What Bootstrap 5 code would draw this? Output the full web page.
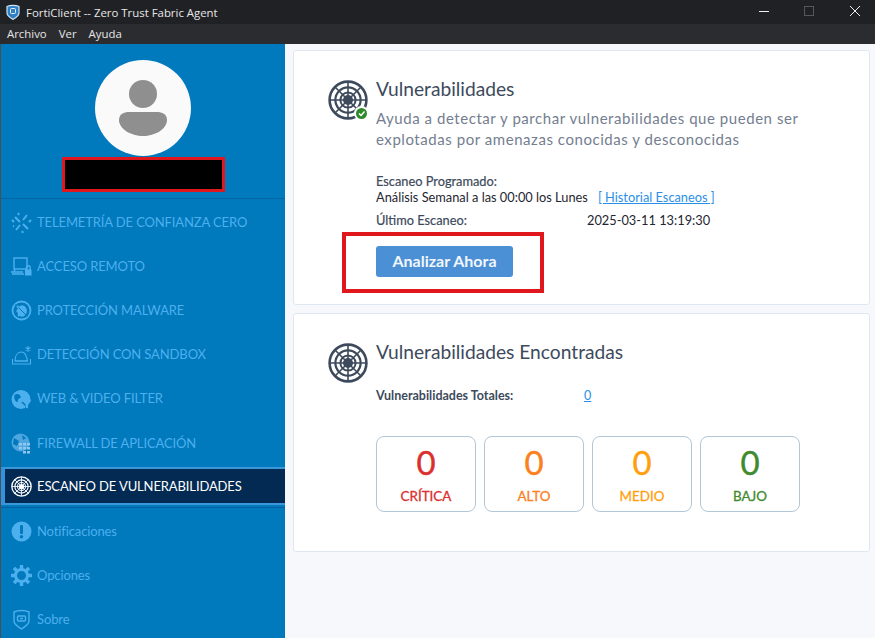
<!DOCTYPE html>
<html lang="es">
<head>
    <meta charset="UTF-8">
    <title>FortiClient -- Zero Trust Fabric Agent</title>
    <link href="https://cdn.jsdelivr.net/npm/bootstrap@5.3.0/dist/css/bootstrap.min.css" rel="stylesheet">
    <style>
        html, body { height: 100%; }
        body {
            background: #f6f8fb;
            font-family: "Lato", sans-serif;
            overflow: hidden;
            color: #3d4a5c;
        }
        .app-shell { width: 875px; height: 638px; }
        .title-strip {
            height: 24px;
            background: #202124;
            color: #e8e8e8;
            font: 11.4px "Open Sans", sans-serif;
            padding-left: 6px;
        }
        .title-strip span.app-name { margin-left: 6px; }
        .win-controls { margin-left: auto; width: 116px; }
        .menu-strip {
            height: 20px;
            background: #2b2c30;
            color: #e6e6e6;
            font: 11.4px "Open Sans", sans-serif;
            padding-left: 7px;
            gap: 12px;
        }
        .side-panel {
            width: 285px;
            background: #0079bd;
            border-left: 1px solid #4a4f55;
            flex-shrink: 0;
        }
        .profile-box {
            height: 155px;
            padding-top: 16px;
            border-bottom: 1px solid #0565a0;
        }
        .avatar-disc {
            width: 96px;
            height: 96px;
            border-radius: 50%;
            background: #fafafa;
        }
        .name-hidden {
            width: 163px;
            height: 35px;
            margin-top: 1px;
            background: #000;
            border: 3px solid #e0171c;
        }
        .side-link {
            height: 44.2px;
            padding-left: 10px;
            gap: 5px;
            color: #4db0ee;
            font-size: 13px;
            letter-spacing: -.12px;
            white-space: nowrap;
        }
        .side-link svg { width: 21px; height: 21px; flex-shrink: 0; }
        .side-link.first-link { margin-top: 1.5px; }
        .side-link.is-active {
            height: 38px;
            margin-top: 2px;
            margin-bottom: 4px;
            padding-left: 6px;
            background: #022a52;
            border-left: 4px solid #2f93e0;
            border-top: 2px solid #3a97da;
            border-bottom: 2px solid #3a97da;
            color: #fff;
            box-shadow: 0 2px 0 #0079bd, 0 3px 0 #0565a0;
        }
        .main-pane { padding: 6px 5px 0 8px; min-width: 0; }
        .info-panel {
            background: #fff;
            border: 1px solid #dfe8f2;
            border-radius: 3px;
            padding-left: 34px;
        }
        .panel-scan { height: 255px; padding-top: 27px; }
        .panel-found { height: 239px; margin-top: 8px; padding-top: 27px; }
        .radar-wrap { width: 40px; height: 40px; margin-top: 2px; position: relative; flex-shrink: 0; }
        .radar-wrap svg.radar-main { width: 40px; height: 40px; display: block; }
        .ok-mark {
            position: absolute;
            right: -1px;
            bottom: -1px;
            width: 15px;
            height: 15px;
        }
        .panel-body-text { margin-left: 8px; }
        .panel-heading {
            font-size: 19.2px;
            line-height: 24px;
            font-weight: 400;
            color: #3d4a5c;
            margin: -1px 0 0;
        }
        .panel-desc {
            font-size: 15px;
            line-height: 21px;
            color: #747e90;
            letter-spacing: .55px;
            margin: 7px 0 0;
            white-space: nowrap;
        }
        .meta-rows { margin-top: 23px; margin-left: 48px; font-size: 12.8px; color: #1f2630; line-height: 16px; }
        .meta-label { color: #3d4a5c; -webkit-text-stroke: .2px currentColor; }
        .meta-link { color: #2b8fe8; margin-left: 10px; }
        .date-row { margin-top: 7px; }
        .date-row .meta-label { width: 211px; }
        .scan-btn-wrap { position: relative; margin-top: 18px; margin-left: 48px; }
        .scan-btn {
            background: #4b90d5;
            border: 0;
            color: #f1f6fb;
            font-size: 16px;
            font-weight: 700;
            width: 137px;
            height: 31px;
            padding: 0;
            border-radius: 3px;
        }
        .scan-btn:hover { background: #4b90d5; color: #f1f6fb; }
        .red-annot {
            position: absolute;
            left: -34px;
            top: -14px;
            width: 202px;
            height: 61px;
            border: 4px solid #e0171c;
            pointer-events: none;
        }
        .totals-row { margin-left: 48px; margin-top: 5px; font-size: 12.5px; line-height: 16px; }
        .totals-row .meta-label { width: 208px; font-weight: 700; -webkit-text-stroke: 0; }
        .totals-row a { color: #2b8fe8; }
        .tile-row { margin-left: 48px; margin-top: 32px; gap: 8px; }
        .sev-tile {
            width: 100px;
            height: 76px;
            border: 1px solid #b3c7d6;
            border-radius: 8px;
            text-align: center;
            padding-top: 5px;
        }
        .sev-num { font-size: 33px; line-height: 40px; -webkit-text-stroke: .4px currentColor; }
        .sev-name { font-size: 13.4px; line-height: 18px; margin-top: 5px; -webkit-text-stroke: .3px currentColor; }
        .sev-crit { color: #d9302f; }
        .sev-high { color: #fb8020; }
        .sev-med { color: #ff9f10; }
        .sev-low { color: #3f8a2c; }
    </style>
</head>
<body>
    <svg width="0" height="0" class="position-absolute">
        <symbol id="radar" viewBox="0 0 40 40">
            <g fill="none" stroke="currentColor">
                <circle cx="20" cy="20" r="18.4" stroke-width="2.6"/>
                <circle cx="20" cy="20" r="12.6" stroke-width="2.2"/>
                <circle cx="20" cy="20" r="7.6" stroke-width="2"/>
                <path d="M20 2v36M2 20h36M7 7l26 26M33 7L7 33" stroke-width="1.6"/>
            </g>
            <circle cx="20" cy="20" r="5" fill="currentColor"/>
        </symbol>
    </svg>
    <div class="app-shell d-flex flex-column">
        <div class="title-strip d-flex align-items-center">
            <svg width="14" height="16" viewBox="0 0 14 16"><path d="M1 2.500C4 1 10 1 13 2.500V9c0 3-3.500 5-6 6.500C4.500 14 1 12 1 9z" fill="#2f7fc4" stroke="#cfe3f5" stroke-width="1.200"/><rect x="4.500" y="4.500" width="5" height="5" rx="1" fill="none" stroke="#e8f2fb"/></svg>
            <span class="app-name">FortiClient -- Zero Trust Fabric Agent</span>
            <div class="win-controls d-flex align-items-center">
                <svg width="116" height="24" viewBox="0 0 116 24">
                    <path d="M0 11.500h10" stroke="#f0f0f0"/>
                    <rect x="45.500" y="6.500" width="9" height="9" fill="none" stroke="#55575b"/>
                    <path d="M91 6l10 10M101 6L91 16" stroke="#f0f0f0"/>
                </svg>
            </div>
        </div>
        <div class="menu-strip d-flex align-items-center">
            <span>Archivo</span><span>Ver</span><span>Ayuda</span>
        </div>
        <div class="d-flex flex-grow-1 overflow-hidden">
            <aside class="side-panel">
                <div class="profile-box d-flex flex-column align-items-center">
                    <div class="avatar-disc d-flex align-items-center justify-content-center">
                        <svg width="48" height="56" viewBox="0 0 48 56">
                            <circle cx="24" cy="14" r="14" fill="#8f8f8f"/>
                            <path d="M10 32h28c5 0 10 2 10 8 0 9-12 16-24 16S0 49 0 40c0-6 5-8 10-8z" fill="#8f8f8f"/>
                        </svg>
                    </div>
                    <div class="name-hidden"></div>
                </div>
                <div class="side-link first-link d-flex align-items-center">
                    <svg viewBox="0 0 21 21" fill="none" stroke="#4db0ee" stroke-width="2"><path d="M4 5l5 5M12 12l5 5M16 3l-4 5M9 13l-4 5M1 8l2 2M20 8l-2 2M7 1l1 2M11 19l1 2M2 14l1 .5"/></svg>
                    <span>TELEMETRÍA DE CONFIANZA CERO</span>
                </div>
                <div class="side-link d-flex align-items-center">
                    <svg viewBox="0 0 21 21" fill="none" stroke="#4db0ee" stroke-width="1.400"><rect x="3" y="2" width="13" height="11"/><path d="M0 16h12M4 13l-1 3M1 18h12"/><rect x="14" y="13.500" width="6.500" height="6" fill="#4db0ee" stroke="none"/><path d="M15.500 14v-2.500a1.800 1.800 0 0 1 3.600 0V14"/></svg>
                    <span>ACCESO REMOTO</span>
                </div>
                <div class="side-link d-flex align-items-center">
                    <svg viewBox="0 0 21 21" fill="none" stroke="#4db0ee" stroke-width="1.800"><circle cx="10.500" cy="10.500" r="9"/><ellipse cx="11" cy="11" rx="4" ry="4.800" fill="#4db0ee"/><path d="M4.500 4.500l12 12" stroke="#0079bd" stroke-width="1"/><path d="M6 6l1.500 1.500M5.500 11h2M7 16l1.500-1.500"/></svg>
                    <span>PROTECCIÓN MALWARE</span>
                </div>
                <div class="side-link d-flex align-items-center">
                    <svg viewBox="0 0 21 21" fill="none" stroke="#4db0ee" stroke-width="1.100"><path d="M1.500 14v5h18v-5M4 16h13"/><path d="M4 16c0-6 3-9 6.500-9 3 0 5 2.500 6 9z"/><path d="M17 1v6M14.500 2.500l5 3M19.500 2.500l-5 3"/></svg>
                    <span>DETECCIÓN CON SANDBOX</span>
                </div>
                <div class="side-link d-flex align-items-center">
                    <svg viewBox="0 0 21 21"><circle cx="10" cy="10.500" r="9.500" fill="#4db0ee"/><path d="M3.500 6c2-2 5-1 6 1s-1 2.500-2 3 0 3-1.500 3-3.500-4-2.500-7zM10 13h10l-4 4v3l-2-1v-2z" fill="#0079bd"/><path d="M11 11.500h9.500l-3.500 4v4l-2.500-1v-3z" fill="#4db0ee"/></svg>
                    <span>WEB &amp; VIDEO FILTER</span>
                </div>
                <div class="side-link d-flex align-items-center">
                    <svg viewBox="0 0 21 21"><circle cx="9.500" cy="9.500" r="9" fill="#4da6df"/><path d="M3 5l5 3-2 5-4-2zM11 2l4 3-3 2z" fill="#0079bd"/><g fill="#8ec8ef"><rect x="8" y="10" width="3" height="2.500"/><rect x="12" y="10" width="3" height="2.500"/><rect x="16" y="10" width="3" height="2.500"/><rect x="8" y="14" width="3" height="2.500"/><rect x="12" y="14" width="3" height="2.500"/><rect x="16" y="14" width="3" height="2.500"/><rect x="12" y="18" width="3" height="2.500"/><rect x="16" y="18" width="3" height="2.500"/></g></svg>
                    <span>FIREWALL DE APLICACIÓN</span>
                </div>
                <div class="side-link is-active d-flex align-items-center">
                    <svg class="text-white"><use href="#radar"/></svg>
                    <span>ESCANEO DE VULNERABILIDADES</span>
                </div>
                <div class="side-link d-flex align-items-center">
                    <svg viewBox="0 0 21 21"><circle cx="10.500" cy="10.500" r="10" fill="#4db0ee"/><rect x="9" y="4" width="3" height="9" rx="1" fill="#0079bd"/><circle cx="10.500" cy="15.800" r="1.800" fill="#0079bd"/></svg>
                    <span>Notificaciones</span>
                </div>
                <div class="side-link d-flex align-items-center">
                    <svg viewBox="0 0 21 21" fill="none" stroke="#4db0ee"><circle cx="10.500" cy="10.500" r="6" stroke-width="3"/><path d="M10.500 0v4M10.500 17v4M0 10.500h4M17 10.500h4M3 3l3 3M15 15l3 3M18 3l-3 3M6 15l-3 3" stroke-width="3.400"/></svg>
                    <span>Opciones</span>
                </div>
                <div class="side-link d-flex align-items-center">
                    <svg viewBox="0 0 21 21" fill="none" stroke="#4db0ee" stroke-width="1.400"><path d="M3 3c4-2 11-2 15 0v9c0 4-5 6-7.500 8C8 18 3 16 3 12z"/><rect x="6.500" y="7" width="8" height="5" rx="1"/><path d="M9 9.500h3"/></svg>
                    <span>Sobre</span>
                </div>
            </aside>
            <main class="main-pane flex-grow-1">
                <section class="info-panel panel-scan">
                    <div class="d-flex">
                        <div class="radar-wrap">
                            <svg class="radar-main"><use href="#radar"/></svg>
                            <svg class="ok-mark" viewBox="0 0 15 15"><circle cx="7.500" cy="7.500" r="7.500" fill="#fff"/><circle cx="7.500" cy="7.500" r="5.500" fill="#2f8a2c"/><path d="M5 7.500l2 2 3.500-4" fill="none" stroke="#fff" stroke-width="1.500"/></svg>
                        </div>
                        <div class="panel-body-text">
                            <h2 class="panel-heading">Vulnerabilidades</h2>
                            <p class="panel-desc">Ayuda a detectar y parchar vulnerabilidades que pueden ser<br>explotadas por amenazas conocidas y desconocidas</p>
                        </div>
                    </div>
                    <div class="meta-rows">
                        <div class="meta-label">Escaneo Programado:</div>
                        <div>Análisis Semanal a las 00:00 los Lunes<a href="#" class="meta-link">[ Historial Escaneos ]</a></div>
                        <div class="d-flex date-row">
                            <div class="meta-label">Último Escaneo:</div>
                            <div>2025-03-11 13:19:30</div>
                        </div>
                    </div>
                    <div class="scan-btn-wrap">
                        <button type="button" class="btn scan-btn">Analizar Ahora</button>
                        <div class="red-annot"></div>
                    </div>
                </section>
                <section class="info-panel panel-found">
                    <div class="d-flex">
                        <div class="radar-wrap">
                            <svg class="radar-main"><use href="#radar"/></svg>
                        </div>
                        <div class="panel-body-text">
                            <h2 class="panel-heading">Vulnerabilidades Encontradas</h2>
                        </div>
                    </div>
                    <div class="totals-row d-flex">
                        <div class="meta-label">Vulnerabilidades Totales:</div>
                        <a href="#">0</a>
                    </div>
                    <div class="tile-row d-flex">
                        <div class="sev-tile sev-crit"><div class="sev-num">0</div><div class="sev-name">CRÍTICA</div></div>
                        <div class="sev-tile sev-high"><div class="sev-num">0</div><div class="sev-name">ALTO</div></div>
                        <div class="sev-tile sev-med"><div class="sev-num">0</div><div class="sev-name">MEDIO</div></div>
                        <div class="sev-tile sev-low"><div class="sev-num">0</div><div class="sev-name">BAJO</div></div>
                    </div>
                </section>
            </main>
        </div>
    </div>
    <script src="https://cdn.jsdelivr.net/npm/bootstrap@5.3.0/dist/js/bootstrap.bundle.min.js"></script>
</body>
</html>
